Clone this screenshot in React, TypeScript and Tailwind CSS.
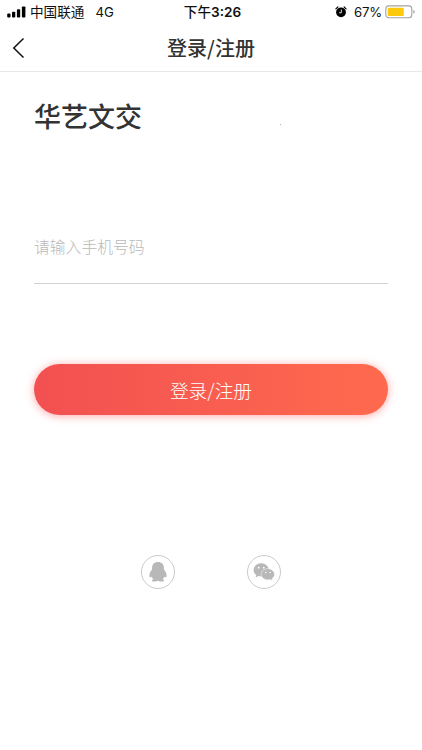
import React from 'react';

const SignalIcon: React.FC = () => (
  <svg width="20" height="12" viewBox="0 0 20 12" fill="#000">
    <rect x="0.2" y="7.6" width="3.3" height="3.9" rx="0.9" />
    <rect x="5" y="5.7" width="3.3" height="5.8" rx="0.9" />
    <rect x="9.9" y="3.2" width="3.3" height="8.3" rx="0.9" />
    <rect x="14.9" y="0.4" width="3.5" height="11.1" rx="0.9" />
  </svg>
);

const AlarmIcon: React.FC = () => (
  <svg width="12" height="12" viewBox="0 0 12 12">
    <circle cx="6" cy="6.3" r="4.9" fill="#000" />
    <path d="M0.9 2.9 2.9 0.9M11.1 2.9 9.1 0.9" stroke="#000" strokeWidth="1.2" strokeLinecap="round" />
    <path d="M6.3 3.6v3.2H4.2" fill="none" stroke="#fff" strokeWidth="0.9" />
  </svg>
);

const BatteryIcon: React.FC = () => (
  <svg width="31" height="14" viewBox="0 0 31 14">
    <rect x="0.8" y="0.9" width="26" height="11.8" rx="3" fill="#fff" stroke="#a3a3a3" strokeWidth="1.1" />
    <rect x="2.7" y="2.7" width="16" height="8.2" rx="1" fill="#fdc90c" />
    <path d="M28.3 4.9c1 .4 1.5 1.1 1.5 1.9s-.5 1.5-1.5 1.9z" fill="#a3a3a3" />
  </svg>
);

const QQIcon: React.FC = () => (
  <svg width="20" height="20" viewBox="0 0 20 20" fill="#b8b8b8">
    <path d="M10 0C6.300 0 4.100 2.400 4.100 5.700v1.900C2.600 9.200 1.400 11.500 1.400 13.800c0 1.300.6 1.700 1.200 1.500l1.200-.5c.3.900.8 1.700 1.500 2.400-.9.300-1.400.7-1.400 1.200 0 .8 1.200 1.200 2.800 1.200 1.400 0 2.700-.3 3.300-.8.6.5 1.900.8 3.300.8 1.600 0 2.800-.4 2.800-1.200 0-.5-.5-.9-1.400-1.200.7-.7 1.200-1.500 1.500-2.400l1.200.5c.6.200 1.200-.2 1.200-1.500 0-2.300-1.200-4.600-2.700-6.200V5.700C15.900 2.400 13.700 0 10 0z" />
  </svg>
);

const WeChatIcon: React.FC = () => (
  <svg width="22" height="20" viewBox="0 0 22 20">
    <path d="M8.200 1.200C4 1.200.6 4.200.6 8c0 2.100 1 3.900 2.700 5.100l-.7 2.500 2.800-1.500c.9.300 1.800.4 2.800.4 4.200 0 7.600-2.900 7.600-6.500s-3.400-6.800-7.600-6.800z" fill="#b8b8b8" />
    <path d="M14.900 6.700c-3.800 0-6.700 2.500-6.700 5.600s2.900 5.600 6.700 5.600c.8 0 1.500-.1 2.200-.3l2.400 1.300-.6-2.100c1.600-1 2.600-2.600 2.600-4.500 0-3.100-2.900-5.600-6.600-5.600z" fill="#b8b8b8" stroke="#fff" strokeWidth="0.5" />
    <g fill="#fff">
      <circle cx="5.7" cy="5.700" r="0.9" />
      <circle cx="10.7" cy="5.700" r="0.9" />
      <circle cx="12.8" cy="10.500" r="0.75" />
      <circle cx="17.1" cy="10.500" r="0.75" />
    </g>
  </svg>
);

const StatusBar: React.FC = () => (
  <div className="grid h-6 grid-cols-[1fr_auto_1fr] items-center pl-[7px] pr-[6px] text-[13.6px] leading-6 text-[#111]">
    <div className="flex items-center">
      <SignalIcon />
      <span className="ml-[3px]">中国联通</span>
      <span className="ml-[11px] text-[13.2px]">4G</span>
    </div>
    <div className="pl-0.5 font-medium">
      下午<span className="font-semibold">3:26</span>
    </div>
    <div className="flex items-center justify-end">
      <AlarmIcon />
      <span className="ml-[7px] mr-[3px] text-[13.2px] tracking-[-0.2px]">67%</span>
      <BatteryIcon />
    </div>
  </div>
);

const App: React.FC = () => {
  return (
    <div className="flex h-[750px] w-[422px] flex-col overflow-hidden bg-white font-[Inter,'Noto_Sans_CJK_SC',sans-serif]">
      <StatusBar />

      {/* Nav bar */}
      <header className="grid h-12 grid-cols-[1fr_auto_1fr] items-center border-b border-[#e8e8e8] px-3">
        <button className="w-4" aria-label="返回">
          <svg width="14" height="22" viewBox="0 0 14 22" fill="none" stroke="#111" strokeWidth="1.5">
            <path d="M11.5 1.5 1.8 11l9.7 9.5" />
          </svg>
        </button>
        <h1 className="pt-px font-['Noto_Sans_CJK_SC',sans-serif] text-[20px] font-medium text-[#333]">登录/注册</h1>
      </header>

      <main className="flex flex-col px-[34px] font-['Noto_Sans_CJK_SC',sans-serif]">
        <div className="mt-6 flex items-center">
          <h2 className="text-[27px] font-medium leading-10 text-[#333]">华艺文交</h2>
          <span className="ml-[138px] mt-[17px] size-px bg-[#b0b0b0]" />
        </div>

        <input
          type="tel"
          placeholder="请输入手机号码"
          className="mt-[74px] h-[74px] border-b border-[#d3d3d3] text-[15.8px] font-light outline-none placeholder:text-[#b9b9b9]"
        />

        <button className="mt-20 h-[51px] rounded-full bg-linear-to-r from-[#f25051] to-[#ff6a4e] pt-[2px] text-[18.7px] font-light text-white shadow-[0_1px_8px_rgba(255,80,80,0.5)]">
          登录/注册
        </button>

        {/* Third-party login */}
        <div className="mt-[140px] flex justify-center gap-[72px]">
          <button className="flex size-[34px] items-center justify-center rounded-full border border-[#cacaca]" aria-label="QQ">
            <QQIcon />
          </button>
          <button className="flex size-[34px] items-center justify-center rounded-full border border-[#cacaca]" aria-label="微信">
            <WeChatIcon />
          </button>
        </div>
      </main>
    </div>
  );
};

export default App;
